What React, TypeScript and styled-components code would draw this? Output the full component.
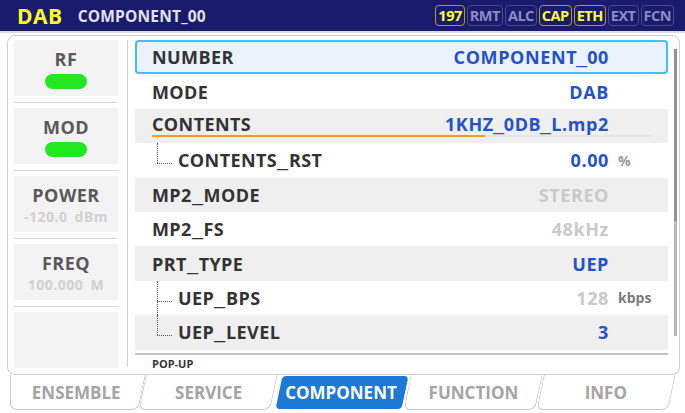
import React from 'react'
import styled, { createGlobalStyle, css } from 'styled-components'

type Tone = 'plain' | 'shade' | 'selected'
type ValueState = 'active' | 'disabled'
type Branch = 'none' | 'last' | 'through'

type Item = {
  label: string
  value: string
  tone: Tone
  state?: ValueState
  unit?: string
  branch?: Branch
  progress?: number
}

const items: Item[] = [
  { label: 'NUMBER', value: 'COMPONENT_00', tone: 'selected' },
  { label: 'MODE', value: 'DAB', tone: 'plain' },
  { label: 'CONTENTS', value: '1KHZ_0DB_L.mp2', tone: 'shade', progress: 66.6 },
  { label: 'CONTENTS_RST', value: '0.00', tone: 'plain', unit: '%', branch: 'last' },
  { label: 'MP2_MODE', value: 'STEREO', tone: 'shade', state: 'disabled' },
  { label: 'MP2_FS', value: '48kHz', tone: 'plain', state: 'disabled' },
  { label: 'PRT_TYPE', value: 'UEP', tone: 'shade' },
  { label: 'UEP_BPS', value: '128', tone: 'plain', state: 'disabled', unit: 'kbps', branch: 'through' },
  { label: 'UEP_LEVEL', value: '3', tone: 'shade', branch: 'last' },
]

const badges = [
  { text: '197', on: true },
  { text: 'RMT', on: false },
  { text: 'ALC', on: false },
  { text: 'CAP', on: true },
  { text: 'ETH', on: true },
  { text: 'EXT', on: false },
  { text: 'FCN', on: false },
]

const tabs = ['ENSEMBLE', 'SERVICE', 'COMPONENT', 'FUNCTION', 'INFO']

// the panel font draws '_' wider than Open Sans does
function withWideUnderscore(text: string): React.ReactNode[] {
  return text.split('_').flatMap((part, i) =>
    i === 0 ? [part] : [<Underscore key={i}>_</Underscore>, part]
  )
}

export default function App(): JSX.Element {
  return (
    <>
      <GlobalStyle />
      <Screen>
        <Header>
          <ModeName>DAB</ModeName>
          <Title>COMPONENT_00</Title>
          <Badges>
            {badges.map((b) => (
              <Badge key={b.text} $on={b.on}>
                {b.text}
              </Badge>
            ))}
          </Badges>
        </Header>

        <Panel>
          <Sidebar>
            <Cell>
              <CellTitle>RF</CellTitle>
              <Lamp />
            </Cell>
            <CellDivider />
            <Cell>
              <CellTitle>MOD</CellTitle>
              <Lamp />
            </Cell>
            <CellDivider />
            <Cell>
              <CellTitle>POWER</CellTitle>
              <CellSub>-120.0 dBm</CellSub>
            </Cell>
            <CellDivider />
            <Cell>
              <CellTitle>FREQ</CellTitle>
              <CellSub>100.000 M</CellSub>
            </Cell>
            <CellDivider />
            <Cell />
          </Sidebar>

          <VDivider />

          <List>
            {items.map((it) => (
              <Row key={it.label} $tone={it.tone} $lifted={it.progress !== undefined}>
                {it.branch && <Tree $branch={it.branch} />}
                <Label>{withWideUnderscore(it.label)}</Label>
                <Value $state={it.state ?? 'active'}>{withWideUnderscore(it.value)}</Value>
                <Unit $big={it.unit === 'kbps'}>{it.unit}</Unit>
                {it.progress !== undefined && (
                  <Track>
                    <Fill style={{ width: `${it.progress}%` }} />
                  </Track>
                )}
              </Row>
            ))}
            <ListEnd />
            <PopUp>POP-UP</PopUp>
          </List>

          <Scroll>
            <Thumb />
          </Scroll>
        </Panel>

        <TabBar>
          {tabs.map((t, i) => (
            <Tab key={t} $active={t === 'COMPONENT'} $first={i === 0}>
              <TabText $active={t === 'COMPONENT'}>{t}</TabText>
            </Tab>
          ))}
        </TabBar>
      </Screen>
    </>
  )
}

const GlobalStyle = createGlobalStyle`
  body {
    margin: 0;
    background: #ffffff;
    font-family: "Open Sans", "Noto Sans", sans-serif;
  }
`

const Screen = styled.div`
  width: 685px;
  height: 413px;
  overflow: hidden;
  display: flex;
  flex-direction: column;
  background: #ffffff;
`

const Header = styled.div`
  height: 31px;
  flex: none;
  display: flex;
  align-items: center;
  padding: 0 11px 0 17px;
  background: #1b1b6e;
  border-bottom: 2px solid #dcdce4;
`

const ModeName = styled.span`
  color: #ffff24;
  font-size: 21px;
  font-weight: 700;
  letter-spacing: 0.5px;
  margin-right: 15px;
`

const Title = styled.span`
  color: #e2e2ee;
  font-size: 15.5px;
  font-weight: 700;
  letter-spacing: 0.2px;
`

const Badges = styled.div`
  margin-left: auto;
  display: flex;
  gap: 2px;
`

const Badge = styled.span<{ $on: boolean }>`
  height: 21px;
  box-sizing: border-box;
  padding: 0 2px;
  display: flex;
  align-items: center;
  justify-content: center;
  border-radius: 4px;
  font-size: 14.5px;
  font-weight: 700;
  letter-spacing: -0.5px;
  border: 1.5px solid ${(p) => (p.$on ? '#a89e2c' : '#4a4a8c')};
  color: ${(p) => (p.$on ? '#ffff30' : '#8c8cc0')};
`

const Panel = styled.div`
  height: 340px;
  box-sizing: border-box;
  margin: 2px 5px 0 7px;
  padding: 4px 0 0 6px;
  display: flex;
  border: 1px solid #cfcfcf;
  border-radius: 8px;
`

const Sidebar = styled.div`
  width: 104px;
  flex: none;
  display: flex;
  flex-direction: column;
`

const Cell = styled.div`
  height: 56px;
  display: flex;
  flex-direction: column;
  align-items: center;
  justify-content: center;
  background: #f3f3f3;
`

const CellDivider = styled.div`
  height: 1px;
  margin: 6px 0 5px;
  background: #d2d2d2;
`

const CellTitle = styled.span`
  font-size: 18px;
  font-weight: 700;
  color: #595959;
  line-height: 22px;
  letter-spacing: 0.5px;
`

const CellSub = styled.span`
  font-size: 14px;
  font-weight: 700;
  color: #d0d0d0;
  line-height: 17px;
  margin-top: 2px;
  letter-spacing: 0.5px;
  word-spacing: 3px;
`

const Lamp = styled.span`
  width: 42px;
  height: 15px;
  margin-top: 4px;
  border-radius: 8px;
  background: #22e822;
`

const VDivider = styled.div`
  width: 1px;
  height: 327px;
  flex: none;
  margin: 0 7px 0 9px;
  background: #cfcfcf;
`

const List = styled.div`
  width: 533px;
  flex: none;
  display: flex;
  flex-direction: column;
`

const rowTone = {
  plain: css`
    background: #ffffff;
  `,
  shade: css`
    background: #efefef;
  `,
  selected: css`
    background: #eaf3fc;
    box-shadow: inset 0 0 0 2px #3ec2f2;
    border-radius: 4px;
  `,
}

const Row = styled.div<{ $tone: Tone; $lifted: boolean }>`
  position: relative;
  height: 34.4px;
  box-sizing: border-box;
  flex: none;
  display: flex;
  align-items: center;
  padding-left: 17px;
  padding-bottom: ${(p) => (p.$lifted ? '4px' : '0')};
  ${(p) => rowTone[p.$tone]}
`

const Tree = styled.span<{ $branch: Branch }>`
  position: relative;
  align-self: stretch;
  width: 15px;
  margin: 0 6px 0 5px;
  flex: none;

  &::before {
    content: '';
    position: absolute;
    left: 0;
    top: 0;
    height: ${(p) => (p.$branch === 'through' ? '100%' : '58%')};
    border-left: 1px dotted #555;
  }

  &::after {
    content: '';
    position: absolute;
    left: 0;
    right: 0;
    top: 58%;
    border-top: 1px dotted #555;
  }
`

const Label = styled.span`
  flex: 1;
  font-size: 18px;
  font-weight: 700;
  color: #333333;
  letter-spacing: 0.4px;
`

const Underscore = styled.span`
  display: inline-block;
  margin: 0 2px;
  transform: scaleX(1.5);
`

const Value = styled.span<{ $state: ValueState }>`
  font-size: 18px;
  font-weight: 700;
  text-align: right;
  letter-spacing: 0.6px;
  color: ${(p) => (p.$state === 'active' ? '#2552c8' : '#c9c9c9')};

  & > span {
    margin: 0 1px;
  }
`

const Unit = styled.span<{ $big: boolean }>`
  width: 59px;
  flex: none;
  box-sizing: border-box;
  padding-left: 9px;
  font-size: 14px;
  font-weight: 700;
  color: ${(p) => (p.$big ? '#7a7a7a' : '#9a9a9a')};
`

const Track = styled.div`
  position: absolute;
  left: 17px;
  right: 16px;
  bottom: 6px;
  height: 2px;
  background: #e4e4e4;
`

const Fill = styled.div`
  height: 100%;
  background: #f59a23;
`

const ListEnd = styled.div`
  height: 2px;
  margin-top: 3px;
  background: #c4c4c4;
`

const PopUp = styled.div`
  padding-left: 17px;
  margin-top: 1px;
  font-size: 11px;
  font-weight: 700;
  color: #333333;
`

const Scroll = styled.div`
  width: 3px;
  height: 287px;
  margin: 9px 0 0 6px;
  background: #b4b8bd;
`

const Thumb = styled.div`
  height: 60%;
  background: #8c9299;
`

const TabBar = styled.div`
  height: 35px;
  flex: none;
  display: flex;
  padding: 0 13px 0 10px;
`

const Tab = styled.div<{ $active: boolean; $first: boolean }>`
  position: relative;
  flex: 1;
  display: flex;
  align-items: center;
  justify-content: center;

  &::before {
    content: '';
    position: absolute;
    top: 0;
    bottom: 0;
    left: ${(p) => (p.$first ? '8px' : '0')};
    right: 0;
    transform: skewX(-12deg);
    box-sizing: border-box;
    ${(p) =>
      p.$active
        ? css`
            top: 1px;
            bottom: 1px;
            left: 4px;
            right: 2px;
            background: #1c79d6;
            border-radius: 4px;
          `
        : css`
            background: #ffffff;
            border: 1px solid #c9c9c9;
            border-top: none;
            border-radius: 0 0 7px 7px;
          `}
  }

  ${(p) =>
    p.$first &&
    css`
      &::after {
        content: '';
        position: absolute;
        top: 0;
        bottom: 0;
        left: 0;
        width: 50%;
        box-sizing: border-box;
        background: #ffffff;
        border-left: 1px solid #c9c9c9;
        border-bottom: 1px solid #c9c9c9;
        border-bottom-left-radius: 7px;
      }
    `}
`

const TabText = styled.span<{ $active: boolean }>`
  position: relative;
  z-index: 1;
  font-size: 17px;
  font-weight: 700;
  color: ${(p) => (p.$active ? '#ffffff' : '#a4a4a4')};
`
